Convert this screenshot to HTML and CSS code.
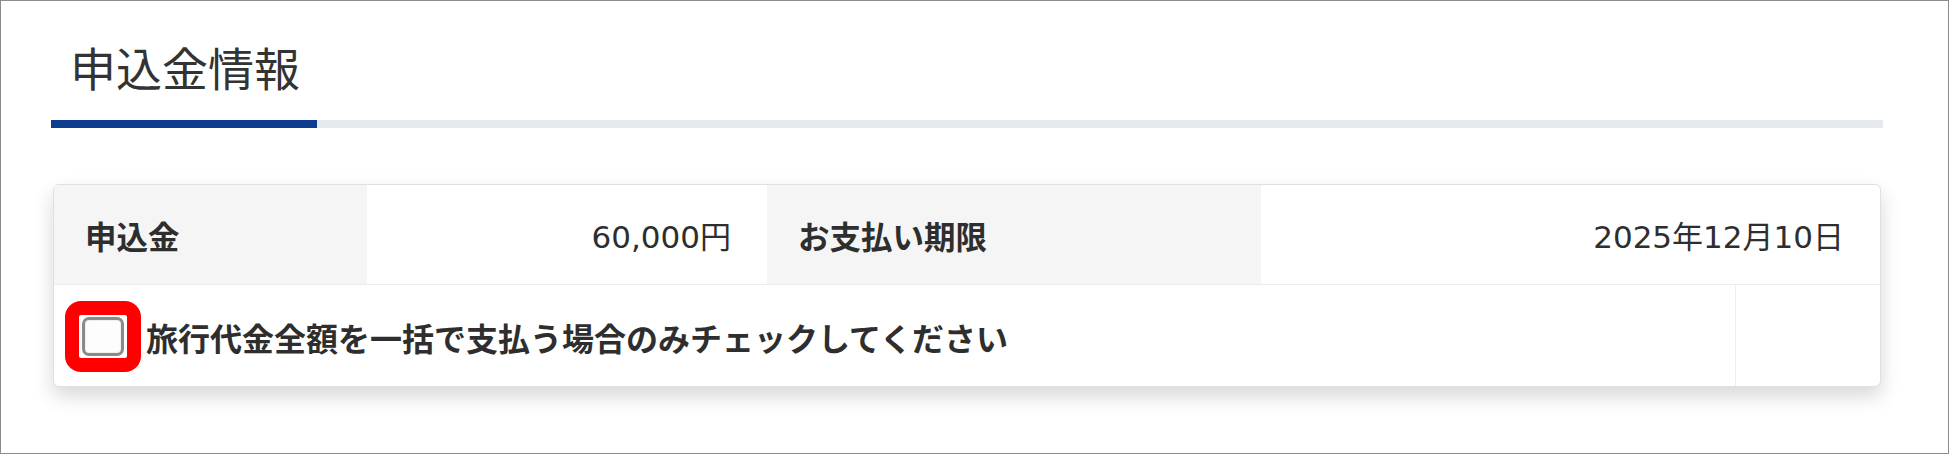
FILE: index.html
```html
<!DOCTYPE html>
<html lang="ja">
<head>
	<meta charset="UTF-8">
	<meta name="viewport" content="width=device-width, initial-scale=1.0">
	<title>申込金情報</title>
	<link rel="stylesheet" href="styles.css">
</head>
<body>
	<div class="frame">
		<section class="section">
			<h2 class="section-title">申込金情報</h2>
			<div class="title-bar"><div class="title-bar-fill"></div></div>

			<div class="card">
				<div class="row row-info">
					<div class="cell label">申込金</div>
					<div class="cell value">60,000円</div>
					<div class="cell label">お支払い期限</div>
					<div class="cell value">2025年12月10日</div>
				</div>
				<div class="row row-check">
					<label class="cell check">
						<span class="mark"><span class="box"></span></span>
						<span class="check-text">旅行代金全額を一括で支払う場合のみチェックしてください</span>
					</label>
					<div class="cell empty"></div>
				</div>
			</div>
		</section>
	</div>
</body>
</html>
```

FILE: styles.css
```css
html, body { margin: 0; padding: 0; background: #fff; }
body { font-family: "DejaVu Sans", "Noto Sans CJK JP", sans-serif; color: #2e2e2e; }
div, section { box-sizing: border-box; }

.frame {
	width: 1949px;
	height: 454px;
	border: 1px solid #8c8c8c;
	padding-top: 43px;
}

.section { margin: 0 0 0 50px; width: 1832px; }

.section-title {
	margin: 0;
	padding-left: 19px;
	font-family: "Noto Sans CJK JP", sans-serif;
	font-weight: normal;
	font-size: 46px;
	line-height: 45px;
	color: #333;
}

.title-bar {
	margin-top: 31px;
	height: 8px;
	background: #e6e9ed;
}
.title-bar-fill { width: 266px; height: 100%; background: #0c3c8d; }

.card {
	margin: 56px 2px 0 2px;
	border: 1px solid #e0e0e0;
	border-radius: 6px;
	overflow: hidden;
	background: #fff;
	box-shadow: 0 9px 20px rgba(0, 0, 0, 0.16);
}

.row { display: grid; }
.row-info { grid-template-columns: 313px 400px 494px 1fr; height: 99px; }
.row-check { grid-template-columns: 1fr 145px; height: 102px; border-top: 1px solid #ececec; }

.cell { display: flex; align-items: center; font-size: 31px; }
.cell.label { background: #f5f5f5; padding-left: 31px; font-weight: bold; font-size: 31.5px; font-family: "Noto Sans CJK JP", sans-serif; }
.cell.value { justify-content: flex-end; padding-right: 36px; }
.cell.empty { border-left: 1px solid #efefef; }

.check { padding-left: 11px; padding-top: 2px; }
.mark {
	display: inline-flex;
	border: 14px solid #ff0000;
	border-radius: 16px;
	padding: 2px 3px;
	background: #fff;
}
.box {
	width: 42px;
	height: 39px;
	box-sizing: border-box;
	border: 3px solid #8a8a8a;
	border-radius: 7px;
	background: #fdfdfd;
	box-shadow: inset 0 0 2px rgba(0, 0, 0, 0.2);
}
.check-text {
	margin-left: 5px;
	font-family: "Noto Sans CJK JP", sans-serif;
	font-size: 32px;
	font-weight: bold;
}
```
